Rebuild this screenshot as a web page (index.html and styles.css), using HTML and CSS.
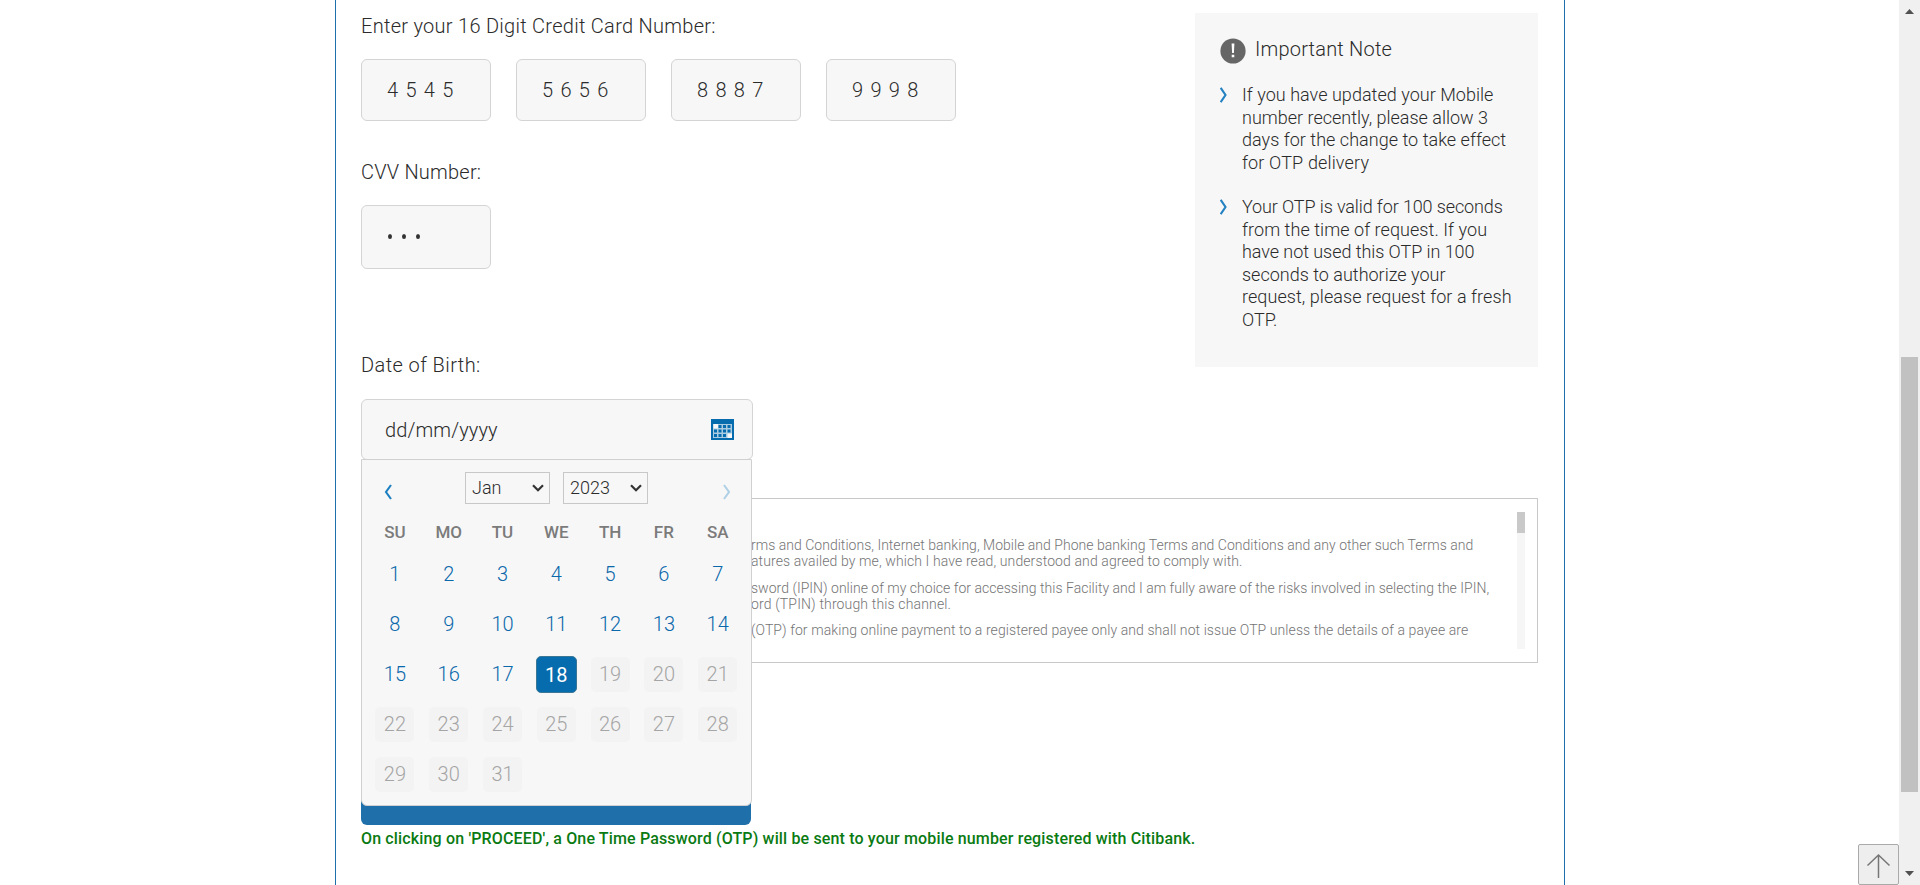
FILE: index.html
```html
<!DOCTYPE html>
<html lang="en">
<head>
<meta charset="utf-8">
<title>Credit Card Registration</title>
<link rel="stylesheet" href="styles.css">
</head>
<body>
<div class="page">
  <main class="frame">
    <div class="top">
      <form class="form">
        <div class="label l-card">Enter your 16 Digit Credit Card Number:</div>
        <div class="cards">
          <div class="box">4545</div><div class="box">5656</div><div class="box">8887</div><div class="box">9998</div>
        </div>
        <div class="label l-cvv">CVV Number:</div>
        <div class="box cvv"><i></i><i></i><i></i></div>
        <div class="label l-dob">Date of Birth:</div>
        <div class="dob">
          <div class="dob-field"><span class="ph">dd/mm/yyyy</span>
            <svg class="cal-icon" width="23" height="21" viewBox="0 0 23 21"><path fill="#066cae" d="M0 0h23v21H0z"/><path fill="#a9cce2" d="M2 5h19v14H2z"/><path fill="#f7f7f7" d="M2.500 5h4.500v4.500H2.500zM16.500 14.500H21V19h-4.500z"/><path stroke="#066cae" stroke-width="3" stroke-dasharray="3 1.500" d="M7.500 7.500H20M3 12H20M3 16.500H15"/></svg>
          </div>
          <div class="popup">
            <div class="nav">
              <svg class="prev" width="8" height="16" viewBox="0 0 8 16"><path d="M7 1L2 8l5 7" fill="none" stroke="#1b7fc0" stroke-width="2.100"/></svg>
              <div class="selects">
                <div class="select"><span class="s-month">Jan</span><svg width="12" height="8" viewBox="0 0 12 8"><path d="M1 1.300l5 5 5-5" fill="none" stroke="#333" stroke-width="2.200"/></svg></div>
                <div class="select"><span class="s-year">2023</span><svg width="12" height="8" viewBox="0 0 12 8"><path d="M1 1.300l5 5 5-5" fill="none" stroke="#333" stroke-width="2.200"/></svg></div>
              </div>
              <svg class="next" width="8" height="16" viewBox="0 0 8 16"><path d="M1 1l5 7-5 7" fill="none" stroke="#b0d0e6" stroke-width="2.100"/></svg>
            </div>
            <div class="week"><b>SU</b><b>MO</b><b>TU</b><b>WE</b><b>TH</b><b>FR</b><b>SA</b></div>
            <div class="days">
              <span>1</span><span>2</span><span>3</span><span>4</span><span>5</span><span>6</span><span>7</span>
              <span>8</span><span>9</span><span>10</span><span>11</span><span>12</span><span>13</span><span>14</span>
              <span>15</span><span>16</span><span>17</span><span class="today">18</span><span class="off">19</span><span class="off">20</span><span class="off">21</span>
              <span class="off">22</span><span class="off">23</span><span class="off">24</span><span class="off">25</span><span class="off">26</span><span class="off">27</span><span class="off">28</span>
              <span class="off">29</span><span class="off">30</span><span class="off">31</span>
            </div>
          </div>
        </div>
      </form>
      <aside class="note">
        <div class="note-title">
          <svg width="26" height="26" viewBox="0 0 26 26"><circle cx="13" cy="13" r="12.600" fill="#666"/><path d="M11.600 5.500h2.800l-.5 9.500h-1.800zM11.700 16.700h2.600v2.500h-2.600z" fill="#fff"/></svg>
          <span>Important Note</span>
        </div>
        <div class="item">
          <svg width="7" height="16" viewBox="0 0 7 16"><path d="M.7.800L5.500 8 .7 15.200" fill="none" stroke="#2482c2" stroke-width="2.100"/></svg>
          <p><span class="n1">If you have updated your Mobile</span><br><span>number recently, please allow 3</span><br><span class="n1">days for the change to take effect</span><br><span class="n4">for OTP delivery</span></p>
        </div>
        <div class="item">
          <svg width="7" height="16" viewBox="0 0 7 16"><path d="M.7.800L5.500 8 .7 15.200" fill="none" stroke="#2482c2" stroke-width="2.100"/></svg>
          <p><span class="n5">Your OTP is valid for 100 seconds</span><br><span class="n6">from the time of request. If you</span><br><span class="n7">have not used this OTP in 100</span><br><span>seconds to authorize your</span><br><span class="n6">request, please request for a fresh</span><br><span>OTP.</span></p>
        </div>
      </aside>
    </div>
    <section class="terms">
      <div class="terms-text">
        <p><span class="t1">rms and Conditions, Internet banking, Mobile and Phone banking Terms and Conditions and any other such Terms and</span><br><span class="t2">atures availed by me, which I have read, understood and agreed to comply with.</span></p>
        <p><span class="t3">sword (IPIN) online of my choice for accessing this Facility and I am fully aware of the risks involved in selecting the IPIN,</span><br><span class="t4">ord (TPIN) through this channel.</span></p>
        <p><span class="t5">(OTP) for making online payment to a registered payee only and shall not issue OTP unless the details of a payee are</span></p>
      </div>
      <div class="track"><div class="thumb"></div></div>
    </section>
    <div class="proceed"></div>
    <p class="hint">On clicking on 'PROCEED', a One Time Password (OTP) will be sent to your mobile number registered with Citibank.</p>
  </main>
  <div class="page-scroll">
    <svg width="9" height="5" viewBox="0 0 9 5"><path d="M0 5L4.500 0 9 5z" fill="#505050"/></svg>
    <div class="page-thumb"></div>
    <svg class="down" width="9" height="5" viewBox="0 0 9 5"><path d="M0 0l4.500 5L9 0z" fill="#505050"/></svg>
  </div>
  <div class="to-top"><svg width="25" height="26" viewBox="0 0 25 26"><path d="M12.500 25V2M1.500 12.500L12.500 2l11 10.500" fill="none" stroke="#777" stroke-width="1.500"/></svg></div>
</div>
</body>
</html>
```
FILE: styles.css
```css
* { box-sizing: border-box; }
body { margin: 0; background: #fff; color: #2b2b2b; font-family: Roboto, "Liberation Sans", sans-serif; font-weight: 300; overflow: hidden; }
p { margin: 0; }
svg { display: block; flex: none; }
.page { position: relative; display: flex; justify-content: space-between; height: 885px; }
.frame { width: 1230px; height: 885px; margin-left: 335px; padding: 0 26px 0 25px; border: 1px solid #1f6fab; border-width: 0 1px; }
.top { display: flex; justify-content: space-between; height: 498px; }
.form { padding-top: 14px; width: 620px; }
.label { height: 24px; font-size: 20px; line-height: 24px; white-space: nowrap; }
.l-card { letter-spacing: .28px; }
.l-cvv { letter-spacing: .22px; }
.l-dob { letter-spacing: .42px; }
.ph { letter-spacing: .1px; }
.cards { display: flex; gap: 25px; margin: 21px 0 39px; }
.box { width: 130px; height: 62px; padding-left: 25px; border: 1px solid #d4d4d4; border-radius: 6px; background: #f7f7f7; font-size: 20px; line-height: 61px; letter-spacing: 7.3px; }
.cvv { display: flex; gap: 10px; height: 64px; margin: 21px 0 84px; padding: 28px 0 0 26px; }
.cvv i { width: 4px; height: 5px; border-radius: 50%; background: #333; }
.dob { position: relative; margin-top: 22px; width: 392px; }
.dob-field { display: flex; align-items: center; justify-content: space-between; height: 61px; padding: 0 18px 0 23px; border: 1px solid #d4d4d4; border-radius: 6px; background: #f7f7f7; font-size: 20px; }
.popup { position: absolute; z-index: 2; left: 0; top: 60px; width: 391px; height: 347px; border: 1px solid #d0d0d0; border-radius: 0 0 6px 6px; background: #f7f7f7; }
.nav { display: flex; justify-content: space-between; padding: 12px 20px 0 22px; height: 62px; }
.prev, .next { margin-top: 12px; }
.selects { display: flex; gap: 13px; margin-right: 2px; }
.select { display: flex; align-items: center; justify-content: space-between; width: 85px; height: 32px; padding: 0 5px 0 6px; border: 1px solid #c8c8c8; font-size: 18px; line-height: 28px; }
.week, .days { display: grid; grid-template-columns: repeat(7, 53.8px); padding-left: 6px; justify-items: center; }
.week b { font-size: 17px; line-height: 20px; font-weight: 500; color: #7b7b7b; }
.days { margin-top: 7px; grid-auto-rows: 50px; align-items: center; }
.days span { width: 39px; height: 35px; border-radius: 5px; text-align: center; font-size: 20px; line-height: 35px; color: #0a68ab; }
.days .off { background: #f3f3f3; color: #a5a5a5; }
.days .today { width: 41px; height: 37px; line-height: 36px; border: 1px solid #3a7795; background: #066cae; color: #fff; font-weight: 400; }
.note { width: 343px; height: 354px; margin-top: 13px; padding: 25px 0 0 25px; background: #f7f7f7; }
.note-title { display: flex; gap: 9px; font-size: 20px; line-height: 22px; height: 46px; letter-spacing: .2px; }
.item { display: flex; gap: 15px; margin-bottom: 22px; font-size: 18px; line-height: 22.5px; white-space: nowrap; }
.item svg { margin-top: 3px; }
.n1 { letter-spacing: .03px; }
.n4 { letter-spacing: .15px; }
.n5 { letter-spacing: -.12px; }
.n6 { letter-spacing: .06px; }
.n7 { letter-spacing: -.06px; }
.terms { display: flex; justify-content: space-between; height: 165px; padding: 13px 12px 0 389px; border: 1px solid #c8c8c8; }
.terms-text { padding-top: 25px; font-size: 14px; line-height: 16px; color: #747474; white-space: nowrap; }
.terms-text p { margin-bottom: 10.5px; }
.t1, .t3 { letter-spacing: .02px; }
.t2 { letter-spacing: .11px; }
.t4 { letter-spacing: .15px; }
.t5 { letter-spacing: .08px; }
.track { width: 8px; height: 137px; background: #f6f6f6; }
.thumb { height: 21px; background: #c9c9c9; }
.proceed { width: 390px; height: 60px; margin-top: 102px; border-radius: 6px; background: #1f6fab; }
.hint { margin-top: 4px; font-size: 16px; line-height: 20px; font-weight: 500; letter-spacing: .152px; color: #0a7a12; white-space: nowrap; }
.page-scroll { width: 21px; height: 885px; padding-top: 9px; background: #f0f0f0; }
.page-scroll svg { margin-left: 6px; }
.page-thumb { width: 17px; height: 435px; margin: 343px 0 79px 2px; background: #c1c1c1; }
.to-top { position: absolute; left: 1858px; top: 844px; width: 41px; height: 41px; border: 1px solid #aaa; border-radius: 2px; background: #eee; padding: 8px 7px; }
```
